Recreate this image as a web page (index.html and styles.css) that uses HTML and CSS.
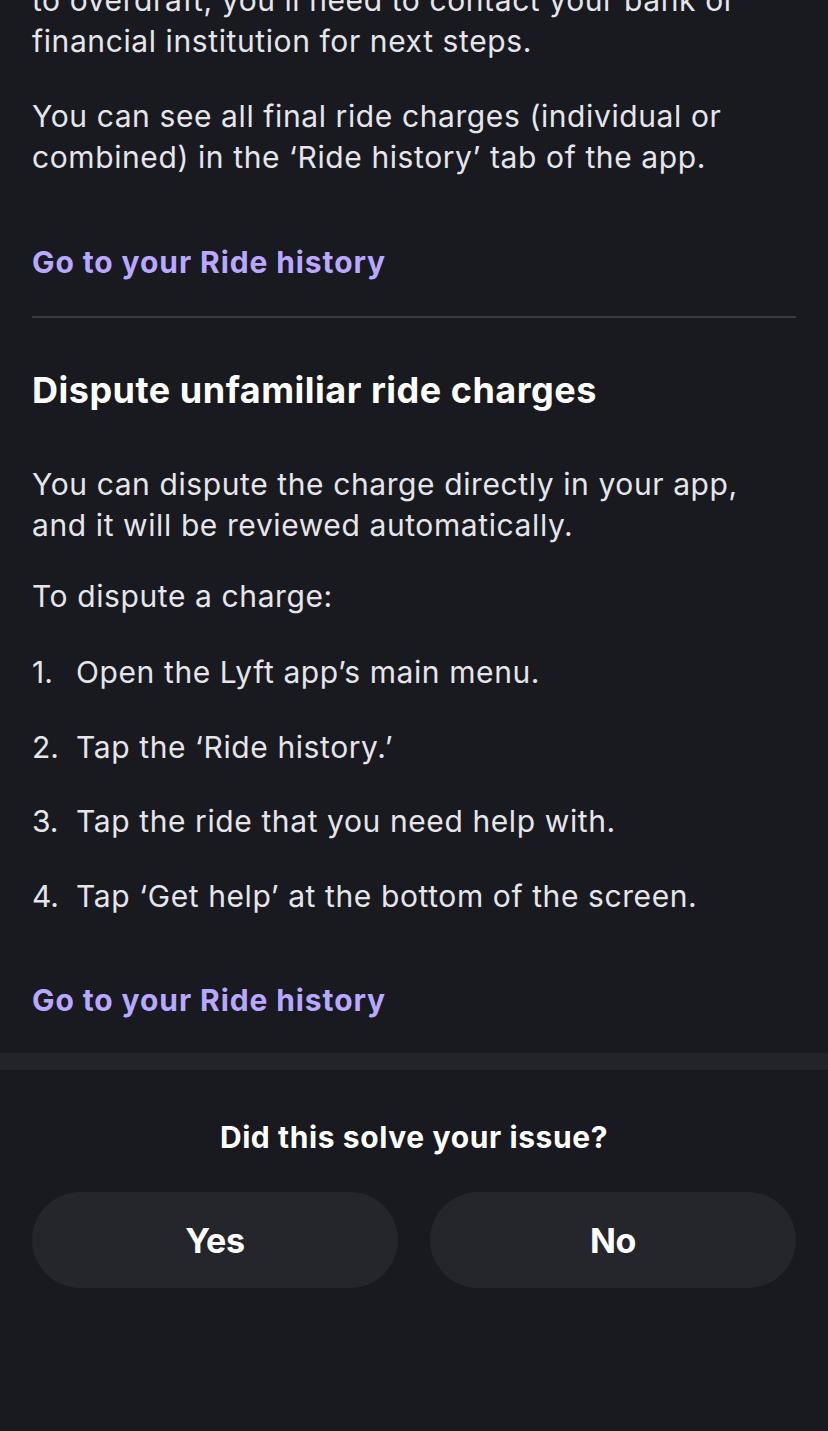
FILE: index.html
```html
<!DOCTYPE html>
<html lang="en">
<head>
<meta charset="utf-8">
<title>Ride charges</title>
<link rel="stylesheet" href="styles.css">
</head>
<body>
<main class="page">
  <section class="article">
    <p class="para first">to overdraft, you’ll need to contact your bank or financial institution for next steps.</p>
    <p class="para">You can see all final ride charges (individual or combined) in the ‘Ride history’ tab of the app.</p>
    <a class="link link-top" href="#">Go to your Ride history</a>
    <hr class="divider">
    <h2 class="heading">Dispute unfamiliar ride charges</h2>
    <p class="para intro">You can dispute the charge directly in your app, and it will be reviewed automatically.</p>
    <p class="para lead">To dispute a charge:</p>
    <ol class="steps">
      <li class="step"><span class="num">1.</span><span class="txt">Open the Lyft app’s main menu.</span></li>
      <li class="step"><span class="num">2.</span><span class="txt">Tap the ‘Ride history.’</span></li>
      <li class="step"><span class="num">3.</span><span class="txt">Tap the ride that you need help with.</span></li>
      <li class="step"><span class="num">4.</span><span class="txt">Tap ‘Get help’ at the bottom of the screen.</span></li>
    </ol>
    <a class="link link-bottom" href="#">Go to your Ride history</a>
  </section>
  <div class="band"></div>
  <section class="feedback">
    <p class="question">Did this solve your issue?</p>
    <div class="buttons">
      <button class="btn" type="button">Yes</button>
      <button class="btn" type="button">No</button>
    </div>
  </section>
</main>
</body>
</html>
```
FILE: styles.css
```css
html, body {
  margin: 0;
  padding: 0;
  background: #191920;
  height: 100%;
  overflow: hidden;
}
body {
  font-family: "Inter", "Liberation Sans", sans-serif;
  color: #e6e6ea;
}
.page {
  display: flex;
  flex-direction: column;
}
.article {
  display: flex;
  flex-direction: column;
  align-items: flex-start;
  padding: 0 32px;
}
.para {
  margin: 34px 0 0;
  font-size: 30px;
  line-height: 41px;
  letter-spacing: 0.6px;
  font-weight: 400;
}
.para.first {
  margin-top: -20px;
}
.link {
  display: block;
  color: #b8a8ff;
  text-decoration: none;
  font-size: 30px;
  line-height: 41px;
  font-weight: 700;
  letter-spacing: 0.9px;
}
.link-top {
  margin-top: 64px;
}
.divider {
  align-self: stretch;
  margin: 33px 0 0;
  border: 0;
  height: 2px;
  background: #3a3a42;
}
.heading {
  margin: 50px 0 0;
  font-size: 36px;
  line-height: 44px;
  font-weight: 700;
  letter-spacing: 0.5px;
  color: #ffffff;
}
.para.intro {
  margin-top: 52px;
}
.para.lead {
  margin-top: 30px;
}
.steps {
  list-style: none;
  margin: 35px 0 0;
  padding: 0;
  display: flex;
  flex-direction: column;
  gap: 33.7px;
}
.step {
  display: grid;
  grid-template-columns: 44px auto;
  font-size: 30px;
  line-height: 41px;
  letter-spacing: 0.6px;
}
.num {
  letter-spacing: 0;
}
.link-bottom {
  margin-top: 63.4px;
}
.band {
  margin-top: 32px;
  height: 17px;
  background: #23232a;
}
.feedback {
  display: flex;
  flex-direction: column;
  align-items: center;
  padding: 0 32px;
}
.question {
  margin: 46.6px 0 0;
  font-size: 30px;
  line-height: 41px;
  font-weight: 700;
  letter-spacing: 0.6px;
  color: #ffffff;
}
.buttons {
  align-self: stretch;
  margin-top: 34.4px;
  display: grid;
  grid-template-columns: 1fr 1fr;
  gap: 32px;
}
.btn {
  height: 96px;
  border: 0;
  border-radius: 48px;
  background: #25252c;
  color: #ffffff;
  font-family: "Inter", "Liberation Sans", sans-serif;
  font-size: 34px;
  font-weight: 700;
  letter-spacing: -0.3px;
  padding: 0;
}
```
